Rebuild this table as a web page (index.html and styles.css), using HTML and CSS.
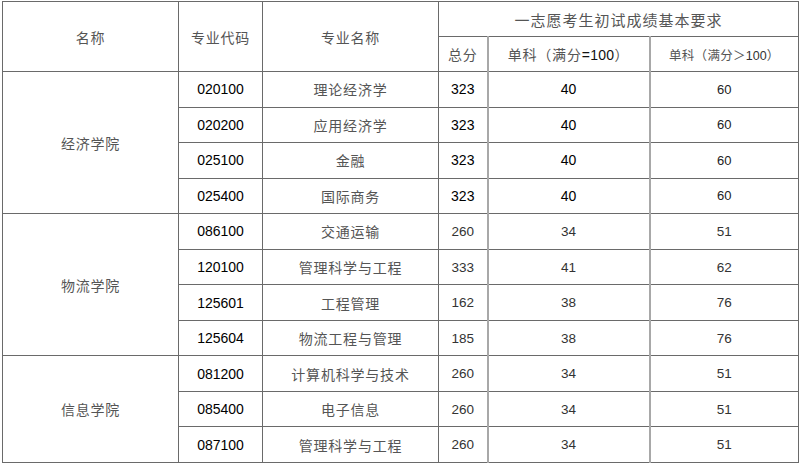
FILE: index.html
```html
<!DOCTYPE html>
<html lang="zh-CN">
<head>
<meta charset="utf-8">
<title>一志愿考生初试成绩基本要求</title>
<link rel="stylesheet" href="styles.css">
</head>
<body>
<table class="score-table">
  <colgroup>
    <col class="c-college">
    <col class="c-code">
    <col class="c-major">
    <col class="c-total">
    <col class="c-single">
    <col class="c-single2">
  </colgroup>
  <thead>
    <tr class="head-row">
      <th rowspan="2" class="cjk">名称</th>
      <th rowspan="2" class="cjk">专业代码</th>
      <th rowspan="2" class="cjk">专业名称</th>
      <th colspan="3" class="cjk title">一志愿考生初试成绩基本要求</th>
    </tr>
    <tr class="head-row">
      <th class="cjk">总分</th>
      <th class="cjk sep">单科（满分<span class="num">=100</span>）</th>
      <th class="cjk sep small">单科（满分＞<span class="num">100</span>）</th>
    </tr>
  </thead>
  <tbody class="group strong">
    <tr><td rowspan="4" class="cjk">经济学院</td><td class="code">020100</td><td class="cjk">理论经济学</td><td class="num">323</td><td class="num sep">40</td><td class="num sep light">60</td></tr>
    <tr><td class="code">020200</td><td class="cjk">应用经济学</td><td class="num">323</td><td class="num sep">40</td><td class="num sep light">60</td></tr>
    <tr><td class="code">025100</td><td class="cjk">金融</td><td class="num">323</td><td class="num sep">40</td><td class="num sep light">60</td></tr>
    <tr><td class="code">025400</td><td class="cjk">国际商务</td><td class="num">323</td><td class="num sep">40</td><td class="num sep light">60</td></tr>
  </tbody>
  <tbody class="group">
    <tr><td rowspan="4" class="cjk">物流学院</td><td class="code">086100</td><td class="cjk">交通运输</td><td class="num">260</td><td class="num sep">34</td><td class="num sep">51</td></tr>
    <tr><td class="code">120100</td><td class="cjk">管理科学与工程</td><td class="num">333</td><td class="num sep">41</td><td class="num sep">62</td></tr>
    <tr><td class="code">125601</td><td class="cjk">工程管理</td><td class="num">162</td><td class="num sep">38</td><td class="num sep">76</td></tr>
    <tr><td class="code">125604</td><td class="cjk">物流工程与管理</td><td class="num">185</td><td class="num sep">38</td><td class="num sep">76</td></tr>
  </tbody>
  <tbody class="group">
    <tr><td rowspan="3" class="cjk">信息学院</td><td class="code">081200</td><td class="cjk">计算机科学与技术</td><td class="num">260</td><td class="num sep">34</td><td class="num sep">51</td></tr>
    <tr><td class="code">085400</td><td class="cjk">电子信息</td><td class="num">260</td><td class="num sep">34</td><td class="num sep">51</td></tr>
    <tr><td class="code">087100</td><td class="cjk">管理科学与工程</td><td class="num">260</td><td class="num sep">34</td><td class="num sep">51</td></tr>
  </tbody>
</table>
</body>
</html>
```

FILE: styles.css
```css
html, body {
  margin: 0;
  padding: 0;
  background: #ffffff;
}

body {
  padding: 1px 0 0 2px;
  font-family: "Liberation Sans", Arial, "Noto Sans CJK SC", sans-serif;
}

.score-table {
  border-collapse: collapse;
  table-layout: fixed;
  width: 796px;
}

.c-college { width: 176px; }
.c-code { width: 84px; }
.c-major { width: 176px; }
.c-total { width: 49px; }
.c-single { width: 162px; }
.c-single2 { width: 149px; }

.score-table th,
.score-table td {
  border: 1px solid #6a6a6a;
  padding: 0;
  text-align: center;
  vertical-align: middle;
  font-weight: normal;
}

.head-row {
  height: 35px;
}

.score-table tbody tr {
  height: 35.55px;
}

.cjk {
  font-family: "Noto Sans CJK SC", "Liberation Sans", sans-serif;
  font-size: 14px;
  letter-spacing: 0.8px;
  color: #555555;
}

.title {
  font-size: 15px;
  letter-spacing: 1px;
}

th.cjk .num {
  font-family: "Liberation Sans", Arial, sans-serif;
  font-size: 14px;
  color: #111;
  letter-spacing: 0.3px;
}

.small {
  font-size: 12.5px;
  letter-spacing: 0.3px;
}

th.small .num {
  font-size: 12.5px;
  color: #333;
  letter-spacing: 0;
}

.code {
  font-size: 14px;
  color: #000;
}

.num {
  font-size: 13.5px;
  color: #333;
}

.strong .num {
  font-size: 14px;
  color: #000;
}

.strong .num.light {
  font-size: 13px;
  color: #222;
}

.score-table .sep {
  border-left: 2px solid #a8a8a8;
}
```
